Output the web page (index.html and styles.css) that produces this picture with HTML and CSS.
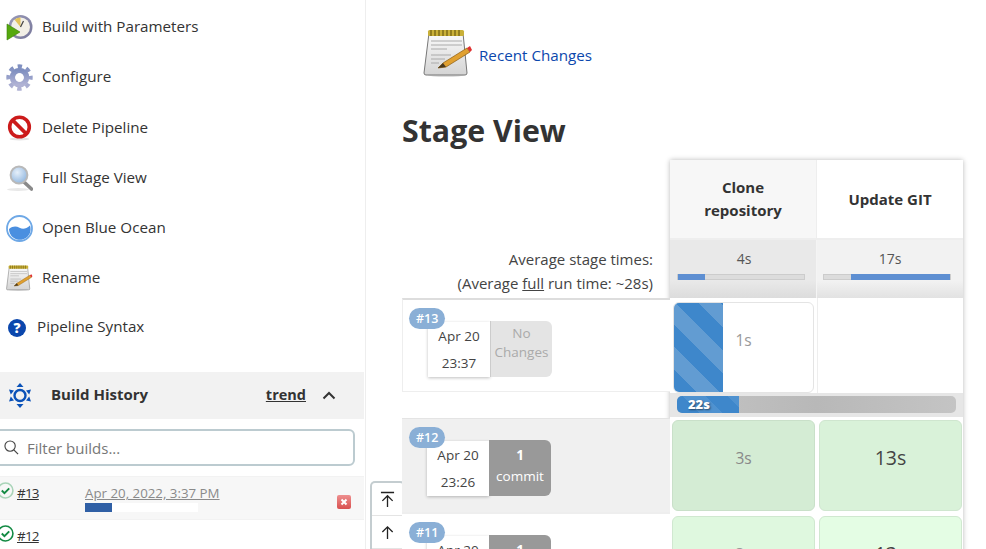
FILE: index.html
```html
<!DOCTYPE html>
<html lang="en">
<head>
<meta charset="utf-8">
<title>Stage View</title>
<link rel="stylesheet" href="styles.css">
</head>
<body>
<svg class="defs" width="0" height="0" aria-hidden="true">
  <defs>
    <linearGradient id="gearG" x1="0" y1="0" x2="0" y2="1"><stop offset="0" stop-color="#7f8fc0"/><stop offset="1" stop-color="#b0b2d4"/></linearGradient>
    <linearGradient id="padG" x1="0" y1="0" x2="0" y2="1"><stop offset="0" stop-color="#fafafa"/><stop offset="1" stop-color="#d4d4d4"/></linearGradient>
    <linearGradient id="xG" x1="0" y1="0" x2="0" y2="1"><stop offset="0" stop-color="#ee8f8f"/><stop offset="1" stop-color="#d9504f"/></linearGradient>
    <radialGradient id="lensG" cx=".4" cy=".35" r=".7"><stop offset="0" stop-color="#e6f0fa"/><stop offset="1" stop-color="#8fb5de"/></radialGradient>
    <linearGradient id="clockG" x1="0" y1="0" x2="1" y2="1"><stop offset="0" stop-color="#9a9ab8"/><stop offset="1" stop-color="#77779a"/></linearGradient>
    <g id="notepad">
      <ellipse cx="23" cy="46" rx="18" ry="2" fill="#ddd"/>
      <path d="M6 4h34l4 40a2 2 0 0 1-2 2H3a2 2 0 0 1-2-2z" fill="url(#padG)" stroke="#777" stroke-width="1"/>
      <rect x="5" y="1" width="36" height="6" rx="1.5" fill="#c9b037"/>
      <path d="M8 1v6M12 1v6M16 1v6M20 1v6M24 1v6M28 1v6M32 1v6M36 1v6" stroke="#6e5d10" stroke-width="1.2"/>
      <path d="M8 12h31M8 16h31M8 20h16M8 26h20M8 30h14M8 34h8" stroke="#aaa" stroke-width="1"/>
      <path d="M15 39l5-5 24-15 3 4-24 15z" fill="#e0a030" stroke="#8a5a10" stroke-width=".7"/>
      <path d="M15 39l5-5 3 4z" fill="#4a3a20"/>
      <path d="M44 19l3 4 2-2-2-4z" fill="#e03030"/>
    </g>
  </defs>
</svg>
<div class="page">
  <aside class="sidebar">
    <nav class="tasks">
      <a class="task">
        <svg class="task-icon" viewBox="0 0 27 27"><circle cx="14.500" cy="13" r="12" fill="url(#clockG)"/><circle cx="14.500" cy="13" r="9.500" fill="#f2efe6"/><path d="M14.500 13V3.500a9.500 9.500 0 0 0-6 2.200z" fill="#e3c25a"/><path d="M14.500 13l3-6" stroke="#444" stroke-width="1.200"/><path d="M1 10l13 8-13 8z" fill="#55a80e" stroke="#3e800a" stroke-width=".6"/></svg>
        <span class="task-label">Build with Parameters</span>
      </a>
      <a class="task">
        <svg class="task-icon" viewBox="0 0 27 27"><circle cx="13.500" cy="13.500" r="11.200" fill="none" stroke="url(#gearG)" stroke-width="4" stroke-dasharray="4.400 4.400" stroke-dashoffset="2.200"/><circle cx="13.500" cy="13.500" r="7" fill="none" stroke="url(#gearG)" stroke-width="5.500"/><circle cx="13.500" cy="13.500" r="4.200" fill="#fff"/></svg>
        <span class="task-label">Configure</span>
      </a>
      <a class="task">
        <svg class="task-icon" viewBox="0 0 27 27"><ellipse cx="13.500" cy="25" rx="10" ry="1.500" fill="#e4e4e4"/><circle cx="13.500" cy="13" r="9.800" fill="#fff" stroke="#cc1b1b" stroke-width="3.600"/><path d="M6.500 6l14 14" stroke="#cc1b1b" stroke-width="3.800"/></svg>
        <span class="task-label">Delete Pipeline</span>
      </a>
      <a class="task">
        <svg class="task-icon" viewBox="0 0 27 27"><ellipse cx="12" cy="25.500" rx="11" ry="1.500" fill="#e8e8e8"/><path d="M18 18l7.500 7" stroke="#8a8a8a" stroke-width="3.600" stroke-linecap="round"/><circle cx="13" cy="11" r="8.400" fill="url(#lensG)" stroke="#b9b9b9" stroke-width="2"/></svg>
        <span class="task-label">Full Stage View</span>
      </a>
      <a class="task">
        <svg class="task-icon" viewBox="0 0 27 27"><circle cx="13.500" cy="13.500" r="12.500" fill="#fff" stroke="#6ea8e6" stroke-width="1.800"/><path d="M3 14c4-3 7-3 10.500-1.200s6.500 1.200 10.500-2.300a10.800 10.800 0 1 1-21 3.500z" fill="#4a8fe0"/></svg>
        <span class="task-label">Open Blue Ocean</span>
      </a>
      <a class="task">
        <svg class="task-icon" viewBox="0 0 50 50"><use href="#notepad"/></svg>
        <span class="task-label">Rename</span>
      </a>
      <a class="task task-help">
        <svg class="help-icon" viewBox="0 0 18 18"><circle cx="9" cy="9" r="9" fill="#0b47ad"/><text x="9" y="14" class="help-q">?</text></svg>
        <span class="task-label">Pipeline Syntax</span>
      </a>
    </nav>

    <section class="history">
      <header class="history-head">
        <svg class="history-icon" viewBox="0 0 24 27"><circle cx="12" cy="13.500" r="5.500" fill="none" stroke="#0b52b8" stroke-width="2.400"/><path d="M12 1l3.500 4h-7zM12 26l3.500-4h-7zM1 7.500l5 1-3.200 4zM23 7.500l-5 1 3.200 4zM1 19.500l5-1-3.200-4zM23 19.500l-5-1 3.200-4z" fill="#0b52b8"/></svg>
        <span class="history-title">Build History</span>
        <a class="trend">trend</a>
        <svg class="chevron" viewBox="0 0 14 9"><path d="M1.500 7.500L7 2l5.500 5.500" fill="none" stroke="#333" stroke-width="2"/></svg>
      </header>
      <div class="filter">
        <svg class="search" viewBox="0 0 16 16"><circle cx="6.500" cy="6.500" r="5.500" fill="none" stroke="#444" stroke-width="1.200"/><path d="M10.500 10.500l4.500 4.500" stroke="#444" stroke-width="1.300"/></svg>
        <span class="placeholder">Filter builds...</span>
      </div>
      <div class="build build-active">
        <svg class="ok" viewBox="0 0 16 16"><circle cx="8" cy="8" r="7" fill="none" stroke="#a9d4b8" stroke-width="1.500"/><path d="M4.500 8l2.500 2.500 4.500-4.500" fill="none" stroke="#138a43" stroke-width="1.800"/></svg>
        <a class="build-link">#13</a>
        <div class="build-time">
          <a class="build-date">Apr 20, 2022, 3:37 PM</a>
          <div class="mini-bar"><div class="mini-fill"></div></div>
        </div>
        <svg class="cancel" viewBox="0 0 14 14"><rect width="14" height="14" rx="2" fill="url(#xG)"/><path d="M4.500 4.500l5 5M9.500 4.500l-5 5" stroke="#fff" stroke-width="2"/></svg>
      </div>
      <div class="build">
        <svg class="ok" viewBox="0 0 16 16"><circle cx="8" cy="8" r="7" fill="none" stroke="#138a43" stroke-width="1.500"/><path d="M4.500 8l2.500 2.500 4.500-4.500" fill="none" stroke="#138a43" stroke-width="1.800"/></svg>
        <a class="build-link">#12</a>
      </div>
    </section>
  </aside>

  <div class="scroll-tools">
    <div class="scroll-btn"><svg viewBox="0 0 16 18" class="scroll-icon"><path d="M1 1.500h14M8 17V5M2.500 10.500L8 5l5.500 5.500" fill="none" stroke="#222" stroke-width="1.400"/></svg></div>
    <div class="scroll-btn"><svg viewBox="0 0 16 16" class="scroll-icon"><path d="M8 15V2M2.500 7.500L8 2l5.500 5.500" fill="none" stroke="#222" stroke-width="1.400"/></svg></div>
  </div>

  <main class="main">
    <div class="recent">
      <svg class="recent-icon" viewBox="0 0 50 50"><use href="#notepad"/></svg>
      <a class="recent-link">Recent Changes</a>
    </div>
    <h1 class="title">Stage View</h1>

    <div class="stage-view">
      <div class="labels">
        <div class="avg-label">
          <div>Average stage times:</div>
          <div>(Average <u>full</u> run time: ~28s)</div>
        </div>
        <div class="run run-13">
          <span class="badge">#13</span>
          <div class="stamp"><span>Apr 20</span><span>23:37</span></div>
          <div class="changes changes-none"><span>No</span><span>Changes</span></div>
        </div>
        <div class="run-gap"></div>
        <div class="run run-12">
          <span class="badge">#12</span>
          <div class="stamp"><span>Apr 20</span><span>23:26</span></div>
          <div class="changes"><strong>1</strong><span>commit</span></div>
        </div>
        <div class="run run-11">
          <span class="badge">#11</span>
          <div class="stamp"><span>Apr 20</span><span>23:20</span></div>
          <div class="changes"><strong>1</strong><span>commit</span></div>
        </div>
      </div>

      <div class="stages">
        <div class="stage-heads">
          <div class="stage-head head-a">Clone repository</div>
          <div class="stage-head head-b">Update GIT</div>
        </div>
        <div class="avgs">
          <div class="avg avg-a"><span>4s</span><div class="avg-bar"><div class="avg-fill fill-a"></div></div></div>
          <div class="avg avg-b"><span>17s</span><div class="avg-bar"><div class="avg-fill fill-b"></div></div></div>
        </div>
        <div class="cells cells-13">
          <div class="cell cell-run"><div class="stripes"></div><span class="cell-time">1s</span></div>
          <div class="cell-empty"></div>
        </div>
        <div class="progress-row">
          <div class="progress"><div class="progress-fill">22s</div></div>
        </div>
        <div class="cells cells-12">
          <div class="cell cell-ok-dim"><span class="cell-time">3s</span></div>
          <div class="cell cell-ok"><span class="cell-time big">13s</span></div>
        </div>
        <div class="cells cells-11">
          <div class="cell cell-ok-a"><span class="cell-time">3s</span></div>
          <div class="cell cell-ok-b"><span class="cell-time big">13s</span></div>
        </div>
      </div>
    </div>
  </main>
</div>
</body>
</html>
```

FILE: styles.css
```css
* { box-sizing: border-box; }
html, body { margin: 0; height: 549px; overflow: hidden; background: #fff; }
body { font-family: "Open Sans", "Noto Sans", sans-serif; color: #333; font-size: 15.200px; }
.defs { position: absolute; }
a { color: inherit; }
.page { display: flex; height: 549px; overflow: hidden; position: relative; }

/* sidebar */
.sidebar { width: 366px; flex: none; border-right: 1px solid #eee; padding-right: 1px; }
.tasks { padding-top: 2px; }
.task { display: flex; align-items: center; height: 50.280px; padding-left: 6px; gap: 9px; color: #333; font-weight: 500; }
.task-label { margin-bottom: 2px; }
.task-icon { width: 27px; height: 27px; flex: none; }
.task-help { padding-left: 8px; gap: 11px; height: 48px; }
.task-help .task-label { margin-bottom: 3px; }
.help-icon { width: 18px; height: 18px; flex: none; }
.help-q { font-size: 14px; font-weight: 800; fill: #fff; text-anchor: middle; }

.history { margin-top: 20.520px; }
.history-head { display: flex; align-items: center; height: 47px; background: #f2f2f2; padding-left: 8px; padding-right: 28px; font-weight: 700; }
.history-icon { width: 24px; height: 27px; flex: none; }
.history-title { margin-left: 19px; font-size: 15px; flex: 1; margin-bottom: 3px; }
.trend { text-decoration: underline; font-size: 14.500px; margin-bottom: 2px; }
.chevron { width: 14px; height: 9px; margin-left: 16px; }
.filter { display: flex; align-items: center; height: 37px; margin: 10px 9px 10px -10px; border: 2px solid #bccbd0; border-radius: 6px; padding-left: 12px; gap: 8px; }
.search { width: 15px; height: 15px; flex: none; }
.placeholder { color: #777; font-size: 15px; }
.build { display: flex; align-items: flex-start; height: 43px; padding-top: 5px; margin-left: -3px; border-top: 1px solid #f2f2f2; }
.build-active { background: #f7f7f7; padding-right: 13px; }
.ok { width: 17px; height: 17px; flex: none; }
.build-link { margin-left: 3px; text-decoration: underline; font-size: 13.500px; letter-spacing: -.8px; line-height: 20px; margin-top: 1px; width: 68px; }
.build-time { width: 235px; margin-top: 1px; }
.build-date { color: #8a8a8a; text-decoration: underline; font-size: 13.300px; line-height: 20px; display: block; }
.mini-bar { width: 113px; height: 9px; background: #fff; }
.mini-fill { width: 27px; height: 9px; background: #2f5fa5; }
.cancel { width: 14px; height: 14px; margin: 13px 0 0 17px; flex: none; }

/* floating scroll buttons */
.scroll-tools { position: absolute; left: 370px; top: 481px; width: 35px; border: 2px solid #c4cdd0; border-bottom: none; border-radius: 5px 5px 0 0; background: #fff; }
.scroll-btn { display: flex; justify-content: center; align-items: center; height: 33px; border-bottom: 1px solid #e4e4e4; }
.scroll-icon { width: 15px; height: 17px; }

/* main */
.main { flex: 1; padding: 28px 0 0 36px; }
.recent { display: flex; align-items: center; padding-left: 21px; height: 52px; }
.recent-icon { width: 50px; height: 52px; flex: none; }
.recent-link { color: #0b47ad; margin-left: 6px; font-size: 15.200px; font-weight: 500; margin-top: 2px; }
.title { font-size: 30.300px; font-weight: 700; margin: 30px 0 0; line-height: 42px; color: #333; height: 50px; }

.stage-view { display: flex; align-items: flex-start; }
.labels { width: 268px; flex: none; }
.avg-label { height: 138px; padding: 87px 17px 0 0; text-align: right; font-size: 15px; line-height: 24px; color: #444; }
.run { position: relative; height: 95px; display: flex; padding: 22px 0 0 25px; }
.run-13 { background: #fff; border: 1px solid #eee; border-right: none; border-top: 2px solid #ddd; height: 94px; }
.run-gap { height: 26px; }
.run-12 { background: #f0f0f0; border-top: 1px solid #e4e4e4; border-bottom: 2px solid #eee; height: 96px; }
.run-11 { background: #fff; height: 60px; }
.badge { position: absolute; left: 7px; top: 8px; height: 21px; padding: 0 7px; border-radius: 11px; background: #8aafd6; color: #fff; font-size: 12.500px; font-weight: 600; line-height: 21px; z-index: 1; }
.run-13 .badge { left: 6px; }
.stamp { width: 62px; height: 55px; background: #fff; box-shadow: 0 1px 3px rgba(0,0,0,.25); display: flex; flex-direction: column; align-items: center; justify-content: space-around; font-size: 13.500px; color: #444; }
.changes { width: 62px; height: 56px; margin-top: -1px; background: #999; color: #fff; border-radius: 0 6px 6px 0; display: flex; flex-direction: column; align-items: center; font-size: 13.500px; padding-top: 5px; line-height: 21px; }
.changes strong { font-weight: 700; font-size: 13.500px; }
.changes-none { background: #e4e4e4; color: #aaa; border-left: 1px solid #ccc; padding-top: 3px; line-height: 19px; }

.stages { width: 293px; flex: none; box-shadow: 0 0 5px rgba(0,0,0,.28); background: #fff; }
.stage-heads { display: flex; height: 80px; }
.stage-head { display: flex; align-items: center; justify-content: center; text-align: center; padding: 0 30px; font-weight: 700; font-size: 15px; line-height: 23px; border-bottom: 2px solid #eee; }
.head-a { width: 147px; background: #f7f7f7; border-right: 1px solid #eee; }
.head-b { width: 146px; }
.avgs { display: flex; height: 58px; }
.avg { background: linear-gradient(#f2f2f2 70%, #e2e2e2); padding-top: 9px; text-align: center; font-size: 14px; color: #555; }
.avg-a { width: 147px; padding-left: 7px; padding-right: 11px; background: linear-gradient(#e9e9e9 70%, #dcdcdc); border-right: 1px solid #f4f4f4; }
.avg-b { width: 146px; padding-left: 6px; padding-right: 12px; }
.avg span { display: block; line-height: 20px; margin-bottom: 5px; padding-left: 6px; }
.avg-bar { height: 6px; background: #dcdcdc; border: 1px solid #ccc; position: relative; }
.avg-fill { position: absolute; top: -1px; bottom: -1px; background: #5e8fd2; }
.fill-a { left: 0; width: 27px; }
.fill-b { left: 27px; right: 0; }
.cells { display: flex; padding: 3px 0 0 2px; gap: 4px; height: 96px; }
.cells-13 { padding: 4px 0 0 3px; gap: 3px; height: 95px; }
.cells-11 { height: 60px; }
.cell { width: 143px; height: 91px; border-radius: 6px; display: flex; align-items: center; position: relative; border: 1px solid #ddd; flex: none; }
.cell-empty { width: 146px; margin-top: -4px; height: 95px; border-left: 1px solid #eee; }
.cell-run { width: 141px; background: #fff; overflow: hidden; justify-content: center; border-color: #e4e4e4; }
.stripes { position: absolute; left: 0; top: 0; bottom: 0; width: 49px; background: repeating-linear-gradient(45deg, #3e87cb 0 16px, #629cd2 16px 32px); }
.cell-time { font-size: 15.500px; color: #999; width: 100%; text-align: center; margin-top: -16px; }
.big { font-size: 19.500px; color: #444; }
.cell-ok-dim { background: #d4ecd4; border-color: #c9e0c9; }
.cell-ok-dim .cell-time { color: #888; }
.cell-ok { background: #d9f2d9; border-color: #cfe6cf; }
.cell-ok-a { background: #dff8df; border-color: #d0e8d0; }
.cell-ok-b { background: #e4fde4; border-color: #d0e8d0; }
.progress-row { height: 24px; background: #e6e6e6; padding: 3px 7px; }
.progress { height: 17px; width: 279px; background: linear-gradient(90deg, #c4c4c4, #b8b8b8 50%, #c4c4c4); border-radius: 5px; overflow: hidden; }
.progress-fill { width: 62px; height: 17px; background: repeating-linear-gradient(45deg, #3e87cb 0 16px, #4f92d0 16px 32px); color: #fff; font-size: 13px; font-weight: 800; line-height: 17px; padding-left: 11px; text-shadow: 1px 1px 2px rgba(0,0,0,.5); }
```
